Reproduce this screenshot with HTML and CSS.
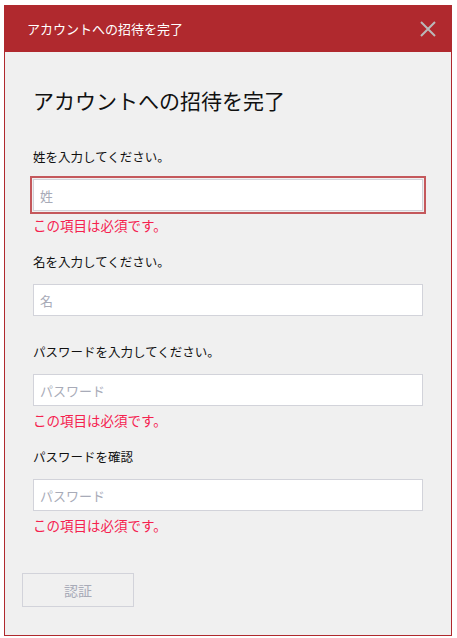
FILE: index.html
```html
<!DOCTYPE html>
<html lang="ja">
<head>
<meta charset="utf-8">
<link rel="stylesheet" href="styles.css">
</head>
<body>
<div class="dialog">
  <div class="titlebar">
    <span class="title">アカウントへの招待を完了</span>
    <svg class="close" width="16" height="16" viewBox="0 0 16 16"><path d="M1 1 L15 15 M15 1 L1 15" stroke="#b9b9b9" stroke-width="2" fill="none"/></svg>
  </div>
  <div class="panel">
    <h1 class="heading">アカウントへの招待を完了</h1>
    <div class="field">
      <div class="label">姓を入力してください。</div>
      <div class="input focused"><span class="ph">姓</span></div>
      <div class="error">この項目は必須です。</div>
    </div>
    <div class="field noerr">
      <div class="label">名を入力してください。</div>
      <div class="input"><span class="ph">名</span></div>
    </div>
    <div class="field">
      <div class="label">パスワードを入力してください。</div>
      <div class="input"><span class="ph">パスワード</span></div>
      <div class="error">この項目は必須です。</div>
    </div>
    <div class="field">
      <div class="label">パスワードを確認</div>
      <div class="input"><span class="ph">パスワード</span></div>
      <div class="error">この項目は必須です。</div>
    </div>
    <div class="btn">認証</div>
  </div>
</div>
</body>
</html>
```
FILE: styles.css
```css
html, body {
  margin: 0;
  padding: 0;
  background: #ffffff;
}
body {
  font-family: "Noto Sans CJK JP", "Noto Sans", sans-serif;
  color: #111;
}
.dialog {
  margin: 5px 0 0 4px;
  width: 448px;
  height: 631px;
  box-sizing: border-box;
  display: flex;
  flex-direction: column;
  background: #f0f0f0;
  border: 1px solid #b0292e;
  border-top: none;
}
.titlebar {
  height: 47px;
  margin: 0 -1px;
  background: #b0292e;
  display: flex;
  align-items: center;
  justify-content: space-between;
  padding: 0 16px 0 23px;
  flex-shrink: 0;
}
.title {
  color: #fff;
  font-size: 13px;
  line-height: 18px;
}
.close {
  display: block;
  width: 16px;
  height: 16px;
}
.panel {
  padding: 33px 0 0 28px;
}
.heading {
  margin: 0 0 33px 0;
  font-weight: normal;
  font-size: 21px;
  line-height: 30px;
  color: #111;
}
.field {
  margin-bottom: 19px;
}
.field.noerr {
  margin-bottom: 27px;
}
.label {
  font-size: 12.5px;
  line-height: 18px;
  margin-bottom: 13px;
}
.input {
  width: 390px;
  height: 32px;
  box-sizing: border-box;
  background: #fff;
  border: 1px solid #d2d3da;
  display: flex;
  align-items: center;
  padding-left: 6px;
}
.input.focused {
  outline: 2px solid #c4585c;
  outline-offset: 1px;
}
.ph {
  font-size: 13px;
  color: #a8abb8;
}
.error {
  margin-top: 5px;
  font-size: 13.5px;
  line-height: 18px;
  color: #f5224f;
}
.btn {
  margin: 39px 0 0 -11px;
  width: 112px;
  height: 34px;
  box-sizing: border-box;
  border: 1px solid #d2d3da;
  display: flex;
  align-items: center;
  justify-content: center;
  font-size: 14px;
  color: #a8abb8;
}
```
